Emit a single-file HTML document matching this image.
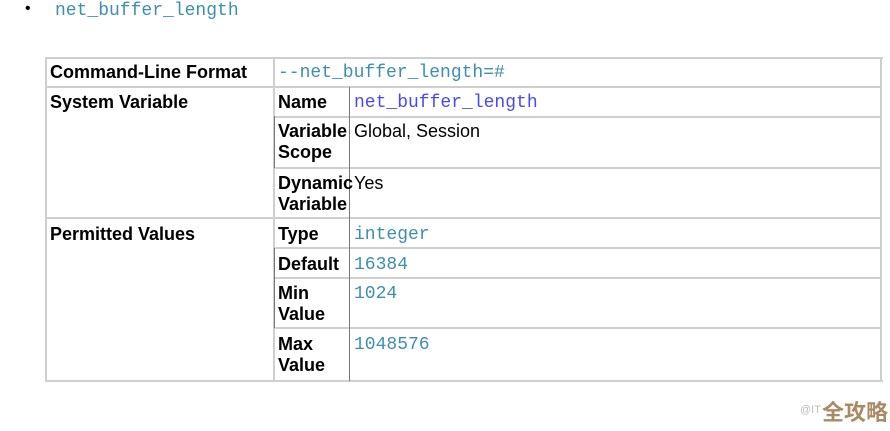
<!DOCTYPE html>
<html><head><meta charset="utf-8"><style>
body{margin:0;background:#fff;width:890px;height:431px;position:relative;overflow:hidden;font-family:"Liberation Sans",Arial,sans-serif;}
.a{position:absolute;}
.b{font-weight:bold;font-size:18px;color:#000;line-height:21px;}
.r{font-size:18px;color:#000;line-height:21px;}
.m{font-family:"Liberation Mono",monospace;font-size:18px;color:#3d8fb0;line-height:20px;}
.h{position:absolute;height:2px;background:#cfcfcf;}
.v{position:absolute;width:2px;background:#cfcfcf;}
.d{position:absolute;width:1px;background:#777;}
</style></head><body>
<div class="a" style="left:25px;top:0;font-size:16px;">•</div>
<div class="a m" style="left:55px;top:1px;">net_buffer_length</div>

<div class="h" style="left:45px;top:57px;width:838px;"></div>
<div class="h" style="left:45px;top:380px;width:838px;"></div>
<div class="v" style="left:45px;top:57px;height:325px;"></div>
<div class="v" style="left:880px;top:57px;height:325px;"></div>
<div class="h" style="left:45px;top:86px;width:837px;"></div>
<div class="h" style="left:45px;top:217px;width:837px;"></div>
<div class="h" style="left:274px;top:116px;width:608px;"></div>
<div class="h" style="left:274px;top:167px;width:608px;"></div>
<div class="h" style="left:274px;top:247px;width:608px;"></div>
<div class="h" style="left:274px;top:277px;width:608px;"></div>
<div class="h" style="left:274px;top:327px;width:608px;"></div>
<div class="v" style="left:273px;top:57px;height:325px;"></div>
<div class="d" style="left:349px;top:87px;height:294px;"></div>
<div class="d" style="left:274px;top:116px;height:52px;"></div>
<div class="d" style="left:274px;top:248px;height:80px;"></div>

<div class="a b" style="left:50px;top:62px;">Command-Line Format</div>
<div class="a m" style="left:278px;top:63px;">--net_buffer_length=#</div>
<div class="a b" style="left:50px;top:92px;">System Variable</div>
<div class="a b" style="left:278px;top:92px;">Name</div>
<div class="a m" style="left:354px;top:93px;color:#4a4af0;">net_buffer_length</div>
<div class="a b" style="left:278px;top:121px;">Variable<br>Scope</div>
<div class="a r" style="left:354px;top:121px;">Global, Session</div>
<div class="a b" style="left:278px;top:173px;">Dynamic<br>Variable</div>
<div class="a r" style="left:354px;top:173px;">Yes</div>
<div class="a b" style="left:50px;top:224px;">Permitted Values</div>
<div class="a b" style="left:278px;top:224px;">Type</div>
<div class="a m" style="left:354px;top:225px;">integer</div>
<div class="a b" style="left:278px;top:254px;">Default</div>
<div class="a m" style="left:354px;top:255px;">16384</div>
<div class="a b" style="left:278px;top:283px;">Min<br>Value</div>
<div class="a m" style="left:354px;top:284px;">1024</div>
<div class="a b" style="left:278px;top:334px;">Max<br>Value</div>
<div class="a m" style="left:354px;top:335px;">1048576</div>

<div class="a" style="left:800px;top:404px;font-size:11px;color:#bbb;">@IT</div>
<div class="a" style="left:822px;top:398px;font-size:22px;font-weight:bold;color:#a88a64;font-family:'Noto Sans CJK SC',sans-serif;line-height:26px;">全攻略</div>
</body></html>
